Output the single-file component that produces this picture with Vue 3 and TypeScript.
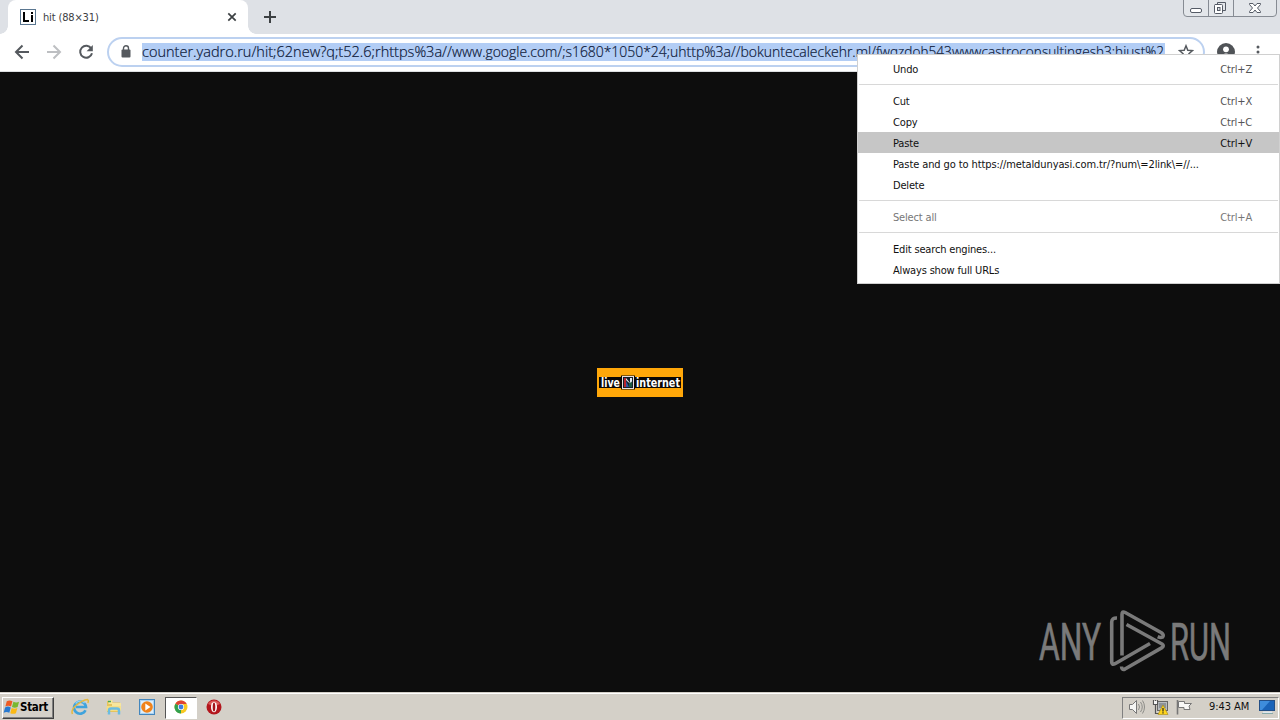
<script setup lang="ts">
interface MenuEntry {
  label?: string
  keys?: string
  state?: 'active' | 'disabled'
  wide?: boolean
  divider?: boolean
}

interface UrlPart {
  text: string
  x: number
  width: number
}

const urlParts: UrlPart[] = [
  { text: 'counter.yadro.ru/hit;62new?q;t52.6;rhttps%3a//', x: 0, width: 310 },
  { text: 'www.google.com/;s1680*1050*24;', x: 310, width: 218 },
  { text: 'uhttp%3a//bokuntecaleckehr.ml/', x: 528, width: 206 },
  { text: 'fwqzdoh543wwwcastroconsultingesh3;hjust%2', x: 734, width: 288 },
]

const entries: MenuEntry[] = [
  { label: 'Undo', keys: 'Ctrl+Z' },
  { divider: true },
  { label: 'Cut', keys: 'Ctrl+X' },
  { label: 'Copy', keys: 'Ctrl+C' },
  { label: 'Paste', keys: 'Ctrl+V', state: 'active' },
  { label: 'Paste and go to https://metaldunyasi.com.tr/?num\\=2link\\=//...', wide: true },
  { label: 'Delete' },
  { divider: true },
  { label: 'Select all', keys: 'Ctrl+A', state: 'disabled' },
  { divider: true },
  { label: 'Edit search engines...' },
  { label: 'Always show full URLs' },
]
</script>

<template>
  <div class="screen">
    <header class="tabstrip">
      <div class="tab">
        <svg class="favicon" width="16" height="16" viewBox="0 0 16 16">
          <rect x=".5" y=".5" width="15" height="15" fill="#fff" stroke="#5a7690" />
          <path d="M3 3h2v8h4v2H3zM11 6h2v7h-2zM11 3h2v2h-2z" fill="#000" />
        </svg>
        <span class="tab-title">hit (88×31)</span>
        <svg class="tab-close" width="10" height="10" viewBox="0 0 10 10">
          <path d="M1.300 1.300l7.400 7.400M8.700 1.300L1.300 8.700" stroke="#3c4043" stroke-width="1.700" />
        </svg>
      </div>
      <svg class="new-tab" width="12" height="12" viewBox="0 0 12 12">
        <path d="M6 0v12M0 6h12" stroke="#3c4043" stroke-width="2" />
      </svg>
      <svg class="caption" width="94" height="18" viewBox="0 0 94 18">
        <path d="M.5 0v13q0 3.500 3.500 3.500h86q3.500 0 3.500-3.500V0M25.500 0v16M50.500 0v16" fill="#e3e6ea" stroke="#868b93" />
        <rect x="7.500" y="8.500" width="11" height="4" rx="1.500" fill="#fff" stroke="#555b66" />
        <path d="M34.500 2.500h8v8h-3M34.500 2.500v2" fill="none" stroke="#555b66" />
        <path d="M32 4.500h6.500q1 0 1 1v7q0 1-1 1h-6q-1 0-1-1v-7q0-1 1-1z" fill="#fff" stroke="#555b66" />
        <rect x="34.500" y="7.500" width="2.500" height="3" fill="#dee1e6" stroke="#555b66" />
        <path d="M66.500 3.500h3.500l2 2.500 2-2.500h3.500v1L74.500 8l3 3.500v1H74l-2-2.500-2 2.500h-3.500v-1l3-3.500-3-3.500z" fill="#fff" stroke="#555b66" />
      </svg>
    </header>

    <div class="toolbar">
      <svg class="nav" width="16" height="16" viewBox="0 0 16 16">
        <path d="M15 8H2.500M8.500 1.500L2 8l6.500 6.500" fill="none" stroke="#55595e" stroke-width="2" />
      </svg>
      <svg class="nav" width="16" height="16" viewBox="0 0 16 16">
        <path d="M1 8h12.500M7.500 1.500L14 8l-6.500 6.500" fill="none" stroke="#bdbfc2" stroke-width="2" />
      </svg>
      <svg class="nav" width="16" height="16" viewBox="0 0 16 16">
        <path d="M13.300 4.600A6 6 0 1 0 14 9.300" fill="none" stroke="#55595e" stroke-width="2" />
        <path d="M14.800 1v6.200H8.600z" fill="#55595e" />
      </svg>
      <div class="omnibox">
        <svg class="lock" width="10" height="13" viewBox="0 0 10 13">
          <rect x="0.500" y="4.500" width="9" height="8" rx="1" fill="#55595e" />
          <path d="M2.500 5V3.300a2.500 2.500 0 0 1 5 0V5" fill="none" stroke="#55595e" stroke-width="1.400" />
        </svg>
        <svg class="url" width="1023" height="18" viewBox="0 0 1023 18">
          <text v-for="part in urlParts" :key="part.x" :x="part.x" y="14" :textLength="part.width" lengthAdjust="spacingAndGlyphs">{{ part.text }}</text>
        </svg>
        <svg class="star" width="16" height="16" viewBox="0 0 16 16">
          <path d="M8 1.800l1.800 4.400 4.700.4-3.600 3.100 1.100 4.600L8 11.800l-4 2.500 1.100-4.600L1.500 6.600l4.700-.4z" fill="none" stroke="#55595e" stroke-width="1.500" />
        </svg>
      </div>
      <svg class="avatar" width="18" height="18" viewBox="0 0 18 18">
        <circle cx="9" cy="9" r="9" fill="#505357" />
        <circle cx="9" cy="6.300" r="2.900" fill="#fff" />
        <path d="M3.500 13.500q2-3 5.500-3t5.500 3q-2 3-5.500 3t-5.500-3z" fill="#fff" />
      </svg>
      <svg class="dots" width="4" height="16" viewBox="0 0 4 16">
        <g fill="#55595e"><circle cx="2" cy="3" r="1.500" /><circle cx="2" cy="8" r="1.500" /><circle cx="2" cy="13" r="1.500" /></g>
      </svg>
    </div>

    <main class="page">
      <svg class="counter" width="86" height="29" viewBox="0 0 86 29">
        <rect width="86" height="29" fill="#ffa709" />
        <rect x="2" y="9" width="82" height="11" fill="#0b0805" />
        <rect x="24" y="7.500" width="14" height="14" fill="#0b0805" />
        <rect x="25.500" y="8.500" width="11" height="12" fill="#16202a" stroke="#e8dede" />
        <path d="M27 10h2v9h-2z" fill="#b9222b" />
        <path d="M29 10l4 5v-5h2v3l-1 3-3-2-2-2z" fill="#e3eaf0" />
        <path d="M29 13l3 6h-3z" fill="#2c54a0" />
        <path d="M32 15l3-1v5h-3z" fill="#1e5b43" />
        <text x="4" y="19" textLength="19" lengthAdjust="spacingAndGlyphs">live</text>
        <text x="39" y="19" textLength="44" lengthAdjust="spacingAndGlyphs">internet</text>
      </svg>
      <svg class="watermark" width="210" height="74" viewBox="0 0 210 74">
        <g class="brand">
          <text x="3" y="53.500" textLength="62" lengthAdjust="spacingAndGlyphs">ANY</text>
          <text x="134" y="53.500" textLength="61" lengthAdjust="spacingAndGlyphs">RUN</text>
        </g>
        <g fill="none" stroke="#7a7a7a" stroke-width="3.600" stroke-linejoin="round" stroke-linecap="butt">
          <path d="M86 49.500V8.500q0-3.700 3.200-2L125 26.500q3.500 2.500 1.700 4.500-2 1-5-.3" />
          <path d="M90.500 18.500l35.500 19.500q2.500 1.700 0 3.600L89 63q-3.300 1.500-3.500-2.500" />
          <path d="M81 12q-5.300-.2-5.300 4V56q0 3.500 3.300 1.700L114 37.500" />
        </g>
      </svg>
    </main>

    <footer class="taskbar">
      <div class="start">
        <svg width="17" height="16" viewBox="0 0 18 16">
          <path d="M4 2q3-2 6 0L8.500 7.500q-3-1.600-6 0z" fill="#ee5b23" />
          <path d="M11 2.500q3 1.500 6 0L15.500 8q-3 1.500-6 0z" fill="#79b82f" />
          <path d="M2.200 8.500q3-2 6 0L6.700 14q-3-1.600-6 0z" fill="#2879d0" />
          <path d="M9.200 9q3 1.500 6 0l-1.500 5.500q-3 1.500-6 0z" fill="#fbb914" />
        </svg>
        <span>Start</span>
      </div>
      <div class="launchers">
        <div class="launcher">
          <svg width="18" height="18" viewBox="0 0 18 18">
            <path d="M14.500 12.200A6 6 0 1 1 15 9H5" fill="none" stroke="#3fa3dc" stroke-width="2.600" />
            <path d="M4.600 5.500a6 6 0 0 1 9-.5" fill="none" stroke="#8fd3f5" stroke-width="1.300" />
            <path d="M1.500 16Q-.5 12 5.500 7t11-5.500q1.500 1 .3 3.500" fill="none" stroke="#e6b93f" stroke-width="1.500" />
          </svg>
        </div>
        <div class="launcher">
          <svg width="18" height="18" viewBox="0 0 18 18">
            <path d="M2 3h5l1 1.500h7V14H2z" fill="#e5c45c" />
            <path d="M3.500 2h4v4h-4zM7 5h9v8H7z" fill="#f7e69c" />
            <path d="M3 3.500h3" stroke="#45a658" stroke-width="1.500" />
            <path d="M1.500 8h14v5h-14z" fill="#f5dd83" />
            <path d="M4 16.500v-4q0-2 2-2h6q2 0 2 2v4" fill="none" stroke="#6bbce1" stroke-width="2.500" />
          </svg>
        </div>
        <div class="launcher">
          <svg width="18" height="18" viewBox="0 0 18 18">
            <rect x="1.500" y="1.500" width="15" height="15" fill="#aad3f3" stroke="#4386bd" />
            <rect x="3" y="3" width="12" height="12" fill="#dceefb" />
            <circle cx="9" cy="9" r="5.800" fill="#f0831b" />
            <path d="M7.300 5.500l5.200 3.500-5.200 3.500z" fill="#fff" />
          </svg>
        </div>
        <div class="launcher pressed">
          <svg width="14" height="14" viewBox="0 0 14 14">
            <circle cx="7" cy="7" r="6.500" fill="#f8c922" />
            <path d="M7 7L1.400 3.700A6.500 6.500 0 0 1 12.700 4H7z" fill="#df4334" />
            <path d="M1.400 3.700L7 7v6.500A6.500 6.500 0 0 1 1.400 3.700z" fill="#31a04f" />
            <circle cx="7" cy="7" r="3.100" fill="#fff" />
            <circle cx="7" cy="7" r="2.400" fill="#3d7de0" />
          </svg>
        </div>
        <div class="launcher">
          <svg width="16" height="16" viewBox="0 0 16 16">
            <circle cx="8" cy="8" r="7.500" fill="#b3161d" />
            <path d="M2 5a7 7 0 0 1 12 0q-6 3-12 0z" fill="#dc5a59" />
            <ellipse cx="8" cy="8" rx="3" ry="5.300" fill="#fff" />
            <ellipse cx="8" cy="8" rx="1.300" ry="4.500" fill="#a4141a" />
          </svg>
        </div>
      </div>
      <div class="tray">
        <svg width="17" height="16" viewBox="0 0 17 16">
          <path d="M1.500 5.500h3l4-4v13l-4-4h-3z" fill="#f5f5f3" stroke="#777" />
          <path d="M10.500 5q2 3 0 6M12.500 3q3.500 5 0 10M14.500 1.500q4 6.500 0 13" fill="none" stroke="#8c8c88" />
        </svg>
        <svg width="17" height="16" viewBox="0 0 17 16">
          <rect x="5.500" y="2.500" width="10" height="9" fill="#b9bcc0" stroke="#666" />
          <rect x="7" y="4" width="7" height="5" fill="#8e9398" />
          <path d="M1.500 1v4.500h4V1M3.500 1v3M3.500 5.500v9H7" fill="none" stroke="#555" stroke-width="1.200" />
          <path d="M2 2h3v3H2z" fill="#f4f4f4" />
          <path d="M11 6l5 9.500H6z" fill="#ffd51c" stroke="#a88910" stroke-width=".6" />
          <path d="M11 9v3.500M11 13.300v1.200" stroke="#222" stroke-width="1.200" />
        </svg>
        <svg width="17" height="16" viewBox="0 0 17 16">
          <path d="M1.500 1v14.500" stroke="#777" stroke-width="1.600" />
          <path d="M2.500 2.500h6v2h7L13 7l1 3.500H8v-2H2.500z" fill="#f8f8f6" stroke="#777" />
        </svg>
        <span class="clock">9:43 AM</span>
        <svg class="desktop" width="16" height="14" viewBox="0 0 16 14">
          <rect x=".5" y=".5" width="15" height="10" fill="#1a63b8" stroke="#244f86" />
          <path d="M1 1h10L3 10H1z" fill="#3e8ddc" />
          <path d="M4 12.500h9" stroke="#dfe6ed" stroke-width="2" />
          <path d="M3 13.500h11" stroke="#8aa" />
        </svg>
      </div>
    </footer>

    <div class="menu">
      <template v-for="(entry, i) in entries" :key="i">
        <div v-if="entry.divider" class="divider"></div>
        <div v-else :class="['entry', entry.state, { wide: entry.wide }]">
          <span>{{ entry.label }}</span>
          <span class="keys">{{ entry.keys }}</span>
        </div>
      </template>
    </div>
  </div>
</template>

<style>
html,
body {
  overflow: hidden;
}
</style>

<style scoped>
.screen {
  position: relative;
  display: flex;
  flex-direction: column;
  width: 1280px;
  height: 720px;
  overflow: hidden;
  background: #0d0d0d;
  font: 11px/14px "DejaVu Sans Condensed", "DejaVu Sans", sans-serif;
  font-stretch: condensed;
  color: #111;
}
svg {
  display: block;
  flex: none;
}
.tabstrip {
  display: flex;
  flex: none;
  height: 34px;
  padding-left: 8px;
  background: #dee1e6;
}
.tab {
  position: relative;
  display: flex;
  align-items: center;
  box-sizing: border-box;
  width: 240px;
  height: 34px;
  padding: 0 11px 0 12px;
  border-radius: 8px 8px 0 0;
  background: #fff;
}
.tab::before,
.tab::after {
  content: "";
  position: absolute;
  bottom: 0;
  width: 8px;
  height: 8px;
}
.tab::before {
  left: -8px;
  background: radial-gradient(circle at 0 0, #dee1e6 7.5px, #fff 8px);
}
.tab::after {
  right: -8px;
  background: radial-gradient(circle at 100% 0, #dee1e6 7.5px, #fff 8px);
}
.tab-title {
  flex: 1;
  margin: 1px 0 0 7px;
  letter-spacing: -0.15px;
  color: #3c4043;
}
.new-tab {
  margin: 11px 0 0 16px;
}
.caption {
  margin: 0 3px 0 auto;
}
.toolbar {
  display: flex;
  flex: none;
  align-items: center;
  box-sizing: border-box;
  height: 38px;
  padding: 0 0 2px 14px;
  border-bottom: 1px solid #dcdee1;
  background: #fff;
}
.nav {
  margin-right: 16px;
}
.omnibox {
  display: flex;
  align-items: center;
  box-sizing: border-box;
  width: 1098px;
  height: 30px;
  margin-left: -3px;
  padding: 0 9px 0 12px;
  border: 2px solid #bcd1f0;
  border-radius: 15px;
}
.url {
  margin-left: 11px;
  background: #b2cdf5;
}
.url text {
  fill: #0c1838;
  stroke: #0c1838;
  stroke-width: 0.2px;
  font: 300 14.5px "Open Sans", "Noto Sans", sans-serif;
}
.star {
  margin-left: 13px;
}
.avatar {
  margin-left: 12px;
}
.dots {
  margin-left: 21px;
}
.page {
  position: relative;
  display: flex;
  flex: 1;
  align-items: center;
  justify-content: center;
}
.counter text {
  fill: #fff;
  font: bold 11.5px "DejaVu Sans Condensed", "DejaVu Sans", sans-serif;
}
.watermark {
  position: absolute;
  top: 534px;
  left: 1036px;
}
.brand text {
  fill: #7a7a7a;
  stroke: #7a7a7a;
  stroke-width: 0.7px;
  font: 52px Roboto, sans-serif;
}
.taskbar {
  display: flex;
  flex: none;
  align-items: center;
  box-sizing: border-box;
  height: 28px;
  padding-top: 2px;
  border-top: 1px solid #d4d0c8;
  box-shadow: inset 0 1px #fff;
  background: #d4d0c8;
}
.start {
  display: flex;
  align-items: center;
  box-sizing: border-box;
  width: 52px;
  height: 22px;
  margin-left: 2px;
  padding-bottom: 2px;
  border: 1px solid;
  border-color: #fff #404040 #404040 #fff;
  box-shadow: inset -1px -1px #808080;
  font-size: 11.5px;
  font-weight: bold;
  letter-spacing: -0.3px;
  color: #000;
}
.launchers {
  display: flex;
  margin-left: 10px;
}
.launcher {
  display: flex;
  align-items: center;
  justify-content: center;
  box-sizing: border-box;
  width: 32px;
  height: 22px;
  margin-right: 1.6px;
  padding-bottom: 2px;
}
.pressed {
  border: 1px solid;
  border-color: #555 #fff #fff #555;
  background: #fff;
}
.tray {
  display: flex;
  align-items: center;
  box-sizing: border-box;
  width: 157px;
  height: 22px;
  margin: 0 1px 0 auto;
  padding: 0 3px 2px 5px;
  gap: 7px;
  border: 1px solid;
  border-color: #808080 #fff #fff #808080;
}
.clock {
  margin-left: 9px;
  letter-spacing: -0.05px;
  white-space: nowrap;
}
.desktop {
  margin-left: auto;
}
.menu {
  position: absolute;
  top: 54px;
  left: 857px;
  box-sizing: border-box;
  width: 423px;
  height: 230px;
  padding-top: 3px;
  border: 1px solid #d0d0d0;
  background: #fff;
}
.entry {
  display: flex;
  justify-content: space-between;
  height: 21px;
  padding: 0 27px 0 35px;
  line-height: 23px;
  letter-spacing: -0.17px;
  white-space: pre;
}
.wide {
  letter-spacing: -0.1px;
}
.keys {
  color: #555;
}
.active {
  background: #c6c6c6;
}
.active .keys {
  color: #111;
}
.disabled,
.disabled .keys {
  color: #777;
}
.divider {
  height: 1px;
  margin: 5px 1px;
  background: #d8d8d8;
}
</style>
